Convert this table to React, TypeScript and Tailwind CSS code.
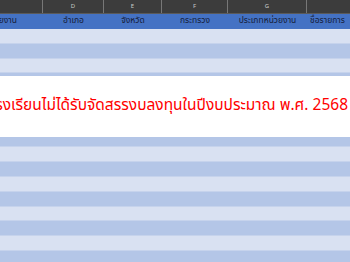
import React from "react";

const cols = [
  { letter: "", label: "หน่วยงาน", w: "w-[43px]", kind: "first" },
  { letter: "D", label: "อำเภอ", w: "w-[61px]", kind: "c" },
  { letter: "E", label: "จังหวัด", w: "w-[58px]", kind: "c" },
  { letter: "F", label: "กระทรวง", w: "w-[66px]", kind: "c" },
  { letter: "G", label: "ประเภทหน่วยงาน", w: "w-[79px]", kind: "c" },
  { letter: "", label: "ชื่อรายการ", w: "w-[80px]", kind: "l" },
];

export default function App() {
  const rows = Array.from({ length: 16 }, (_, i) => i);
  return (
    <div
      className="relative w-[350px] h-[262px] overflow-hidden bg-white"
      style={{ fontFamily: '"Noto Sans Thai", "Noto Sans", Tahoma, sans-serif' }}
    >
      {/* column letters bar */}
      <div className="flex h-[14px] bg-[#3c3c3c] border-b border-[#5a5a5a]">
        {cols.map((c, i) => (
          <div
            key={i}
            className={`${c.w} shrink-0 flex items-center justify-center text-[6px] leading-none text-[#c8c8c8] ${i < cols.length - 1 ? "border-r border-[#777777]" : ""}`}
          >
            {c.letter}
          </div>
        ))}
      </div>
      {/* header row */}
      <div className="flex h-[15px] bg-[#4472c4] text-[8.5px] leading-none text-[#16203a]">
        {cols.map((c, i) => (
          <div
            key={i}
            className={`${c.w} shrink-0 flex items-center overflow-hidden whitespace-nowrap ${
              c.kind === "first" ? "justify-end pr-[26px]" : c.kind === "l" ? "justify-start pl-[3px]" : "justify-center"
            }`}
          >
            {c.label}
          </div>
        ))}
      </div>
      {/* data rows */}
      {rows.map((i) => (
        <div
          key={i}
          className={`h-[14.8px] border-b border-[#c6d3ec] ${i % 2 === 0 ? "bg-[#d9e1f2]" : "bg-[#b4c6e7]"}`}
        />
      ))}
      {/* banner overlay */}
      <div className="absolute left-0 top-[74px] w-[350px] h-[63px] bg-white border-t-2 border-[#b4c6e7] flex items-center justify-end overflow-hidden whitespace-nowrap pr-[2px] pb-[2px]">
        <span className="text-[15.5px] leading-none text-[#ff0000]">
          โรงเรียนไม่ได้รับจัดสรรงบลงทุนในปีงบประมาณ พ.ศ. 2568
        </span>
      </div>
    </div>
  );
}
